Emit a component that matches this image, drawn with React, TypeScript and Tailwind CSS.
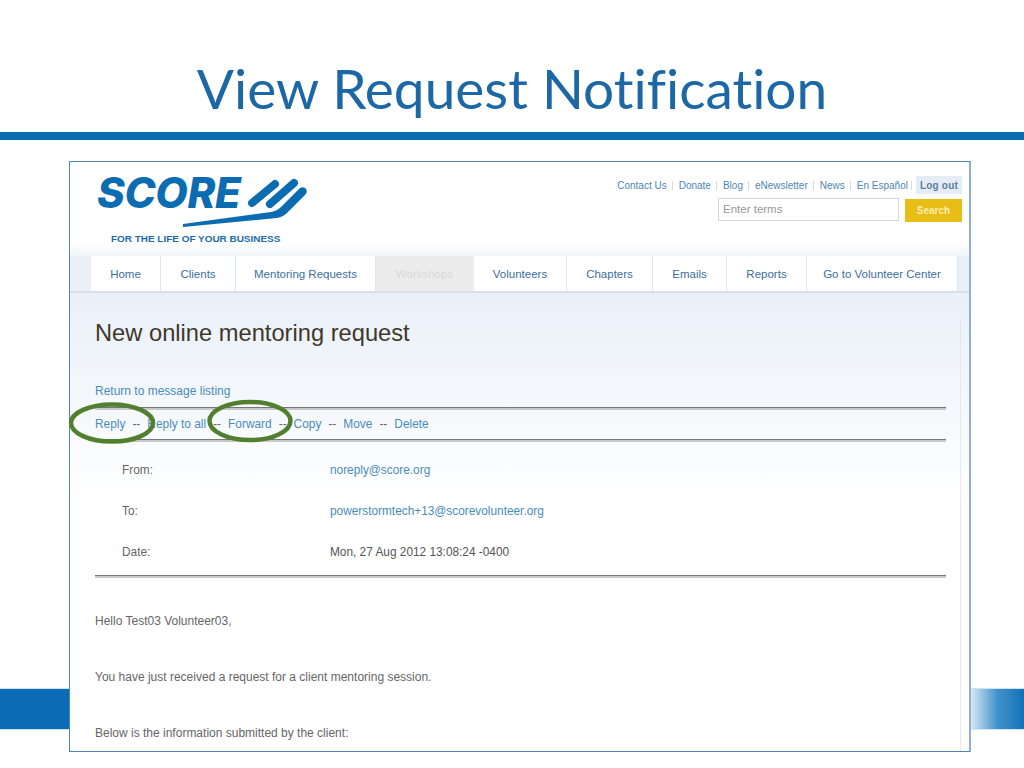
import React from "react";

const sans = { fontFamily: '"Liberation Sans", Arial, sans-serif' };

const nav: [string, string][] = [
  ["Home", "w-[69px]"],
  ["Clients", "w-[74px]"],
  ["Mentoring Requests", "w-[139px]"],
  ["Workshops", "w-[97px]"],
  ["Volunteers", "w-[92px]"],
  ["Chapters", "w-[85px]"],
  ["Emails", "w-[73px]"],
  ["Reports", "w-[79px]"],
  ["Go to Volunteer Center", "w-[150px]"],
];
const top = ["Contact Us", "Donate", "Blog", "eNewsletter", "News", "En Español"];

function Logo() {
  return (
    <div className="relative w-[230px] h-[94px] ml-[27px]">
      <div className="pt-[6px] h-[66px] text-[#0c6cb2] text-[42px] leading-[50px] font-extrabold italic tracking-[-0.3px]" style={{ fontFamily: "Inter, sans-serif" }}>
        SCORE
      </div>
      <svg className="absolute left-0 top-0" width="240" height="70" viewBox="0 0 240 70" fill="none">
        <path d="M155 41 L178 22" stroke="#0c6cb2" strokeWidth="8" strokeLinecap="round" />
        <path d="M173 42 L197 21" stroke="#0c6cb2" strokeWidth="8" strokeLinecap="round" />
        <path d="M86 62 L174 50 Q180 49 184 45 L203 26 Q207 24 209 27 Q211 30 208 33 L190 51 Q186 55 180 56 L86 65 Z" fill="#0c6cb2" />
      </svg>
      <div className="ml-[14px] mt-[5px] text-[9.95px] leading-[12px] font-bold text-[#1c6bab] whitespace-nowrap" style={sans}>
        FOR THE LIFE OF YOUR BUSINESS
      </div>
    </div>
  );
}

export default function App() {
  return (
    <div className="relative w-[1024px] h-[768px] overflow-hidden bg-white" style={sans}>
      <div className="absolute left-0 top-[688px] w-[1024px] h-[42px] bg-[#0a6cb5] border-y border-[#cfe4f4]">
        <div className="absolute left-[970px] top-0 w-[54px] h-[40px] bg-gradient-to-r from-[#dcebf5] to-[#0f72b6] via-[#3f93cb]" />
      </div>

      <h1 className="h-[132px] pt-[51px] text-center text-[55px] leading-[74px] text-[#1c67a6] [font-variant-ligatures:none]" style={{ fontFamily: "Lato, sans-serif" }}>
        View Request Notification
      </h1>
      <div className="h-2 bg-[#0a6cb0]" />

      <div className="relative mt-[21px] ml-[69px] w-[902px] h-[591px] bg-white border border-[#4f86b8] border-r-2 border-r-[#8fb0cf] overflow-hidden">
        <header className="flex justify-between h-[94px] bg-gradient-to-b from-white from-85% to-[#f1f5f9]">
          <Logo />
          <div className="flex flex-col items-end pr-[7px] pt-[14px]">
            <div className="flex items-center h-[18px] text-[10px] text-[#4d86b5]">
              {top.map((t, i) => (
                <React.Fragment key={t}>
                  <span>{t}</span>
                  <span className={(i === 5 ? "mx-[3.5px]" : "mx-[5.5px]") + " w-px h-[9px] bg-[#cfdde9]"} />
                </React.Fragment>
              ))}
              <span className="h-[18px] leading-[19px] px-[4px] bg-[#e4ecf6] font-bold text-[#5d7f9f] tracking-[0.2px]">Log out</span>
            </div>
            <div className="flex gap-[6px] mt-[4px]">
              <div className="w-[181px] h-[23px] border border-[#d6d6d6] bg-white pl-[4px] text-[11.5px] leading-[20px] text-[#999]">Enter terms</div>
              <div className="w-[57px] h-[23px] mt-px bg-[#e8bd15] text-center text-[10px] leading-[23px] font-bold text-[#fbeeb0]">Search</div>
            </div>
          </div>
        </header>

        <nav className="flex h-[37px] pl-[21px] bg-[#e9f0f8] border-b-2 border-[#d8dfe6]">
          {nav.map(([t, w]) => (
            <div
              key={t}
              className={
                w +
                " shrink-0 mr-[1px] text-center text-[11.5px] leading-[36px] whitespace-nowrap " +
                (t === "Workshops" ? "bg-[#ececec] text-[#d8d8d8]" : "bg-white text-[#3c6f9c] shadow-[1px_0_0_#dbe6f0]")
              }
            >
              {t}
            </div>
          ))}
        </nav>

        <main className="relative h-[458px] px-[25px] bg-gradient-to-b from-[#e9f0f8] to-white to-45% text-[12px]">
          <div className="absolute right-[8px] top-[25px] bottom-0 border-r border-dotted border-[#d5d9dd]" />
          <h2 className="pt-[25px] h-[80px] text-[23.7px] leading-[30px] text-[#40392b]">New online mentoring request</h2>
          <div className="h-[34px] pt-[10px] leading-[16px] text-[#4a8cbc]">Return to message listing</div>

          <div className="w-[851px] h-[32px] pt-[2px] border-t border-[#777] shadow-[inset_0_2px_0_#c8c8c8] flex items-center gap-[7px] text-[11.9px] text-[#4a8cbc]">
            <span>Reply</span><span className="text-[#666]">--</span>
            <span>Reply to all</span><span className="text-[#666]">--</span>
            <span>Forward</span><span className="text-[#666]">--</span>
            <span>Copy</span><span className="text-[#666]">--</span>
            <span>Move</span><span className="text-[#666]">--</span>
            <span>Delete</span>
          </div>

          <div className="w-[851px] border-t border-[#777] shadow-[inset_0_2px_0_#c8c8c8] pt-[10px]">
            {[
              ["From:", "noreply@score.org", true],
              ["To:", "powerstormtech+13@scorevolunteer.org", true],
              ["Date:", "Mon, 27 Aug 2012 13:08:24 -0400", false],
            ].map(([l, v, link]) => (
              <div key={l as string} className="flex h-[41px] pl-[27px] leading-[41px] text-[11.85px]">
                <span className="w-[208px] text-[#666]">{l}</span>
                <span className={link ? "text-[#4a8cbc]" : "text-[#555]"}>{v}</span>
              </div>
            ))}
          </div>

          <div className="w-[851px] h-[3px] mt-[2px] border-t border-[#777] bg-[#c8c8c8]" />
          <p className="mt-[35px] h-[56px] leading-[16px] text-[#666]">Hello Test03 Volunteer03,</p>
          <p className="h-[56px] leading-[16px] text-[#666]">You have just received a request for a client mentoring session.</p>
          <p className="leading-[16px] text-[#666]">Below is the information submitted by the client:</p>
        </main>
      </div>

      <svg className="absolute left-[66px] top-[398px]" width="230" height="48" viewBox="0 0 230 48" fill="none" stroke="#527f2e" strokeWidth="4.5">
        <ellipse cx="46" cy="25" rx="41" ry="18.5" />
        <ellipse cx="184" cy="23" rx="40.5" ry="19" />
      </svg>
    </div>
  );
}
